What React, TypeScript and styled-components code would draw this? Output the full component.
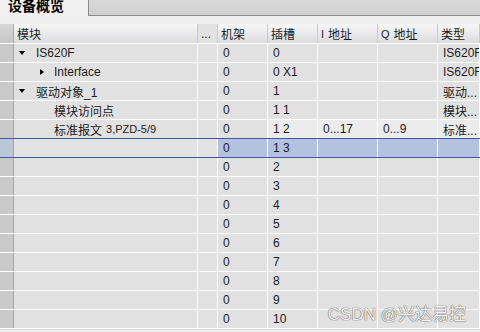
import styled, { createGlobalStyle } from "styled-components";

const GlobalStyle = createGlobalStyle`
  html, body {
    margin: 0;
    padding: 0;
    background: #efefef;
  }
`;

type Tone = "normal" | "hover" | "selected" | "focus";

const toneBg: Record<Tone, string> = {
  normal: "#e1e1e1",
  hover: "#ececec",
  selected: "#b3c2df",
  focus: "#e3e3e3",
};

const COLS = "14px 184px 20px 50px 50px 60px 60px 1fr";

// 스타일
const Page = styled.div`
  position: relative;
  width: 480px;
  height: 332px;
  overflow: hidden;
  background: #efefef;
  font-family: "Liberation Sans", "Noto Sans CJK SC", sans-serif;
  font-size: 12px;
  color: #1c1c1c;
`;

const TabStrip = styled.div`
  display: flex;
  height: 16px;
`;

const Tab = styled.div`
  width: 89px;
  background: #f0f0f0;
  border-right: 1px solid #8a8a8a;
  padding-left: 8px;
  box-sizing: border-box;
  font-size: 14px;
  font-weight: bold;
  line-height: 14px;
  color: #000;
  overflow: hidden;
  span {
    display: block;
    margin-top: -1px;
  }
`;

const TabRest = styled.div`
  flex: 1;
  background: linear-gradient(#d9d9d9, #cfcfcf);
  border-bottom: 1px solid #8c8c8c;
`;

const Table = styled.div`
  margin-top: 8px;
  display: flex;
  flex-direction: column;
`;

const HeaderRow = styled.div`
  display: grid;
  grid-template-columns: ${COLS};
  height: 20px;
  border-bottom: 1px solid #ffffff;
  box-sizing: border-box;
`;

const HeadCell = styled.div<{ $flat?: boolean }>`
  display: flex;
  align-items: center;
  padding-left: 3px;
  background: ${(p) =>
    p.$flat ? "#e2e2e2" : "linear-gradient(#f6f6f6, #e9e9eb 55%, #dcdcdf)"};
  border-right: 1px solid #cacaca;
  white-space: nowrap;
  overflow: hidden;
  small {
    font-size: 11px;
    margin-right: 4px;
  }
`;

const HeadGutter = styled.div`
  background: linear-gradient(#d6d6d6, #c6c6c6);
  border-right: 1px solid #a8a8a8;
`;

const Row = styled.div<{ $selected?: boolean }>`
  display: grid;
  grid-template-columns: ${COLS};
  height: 19px;
  border-bottom: 1px solid ${(p) => (p.$selected ? "#3f55a6" : "#ffffff")};
  box-sizing: border-box;
  box-shadow: ${(p) => (p.$selected ? "0 -1px 0 #3f55a6" : "none")};
`;

const Gutter = styled.div<{ $selected?: boolean }>`
  background: ${(p) => (p.$selected ? "#bcc7d6" : "#c9c9c9")};
  border-right: 1px solid #a8a8a8;
`;

const Cell = styled.div<{ $tone: Tone }>`
  display: flex;
  align-items: center;
  padding-left: 5px;
  background: ${(p) => toneBg[p.$tone]};
  border-right: 1px solid #ffffff;
  white-space: nowrap;
  overflow: hidden;
  small {
    font-size: 11px;
    margin-left: 4px;
  }
`;

const Toggle = styled.span<{ $open?: boolean; $none?: boolean }>`
  display: inline-flex;
  width: 17px;
  height: 18px;
  align-items: center;
  flex-shrink: 0;
  &::before {
    content: "";
    display: ${(p) => (p.$none ? "none" : "block")};
    width: 0;
    height: 0;
    margin-left: ${(p) => (p.$open ? "0" : "3px")};
    border-style: solid;
    border-color: transparent;
    ${(p) =>
      p.$open
        ? "border-width: 4.5px 3.5px 0 3.5px; border-top-color: #000;"
        : "border-width: 3.5px 0 3.5px 4px; border-left-color: #000;"}
  }
`;

const BottomBar = styled.div`
  height: 2px;
  border-top: 1px solid #d8d8d8;
  border-bottom: 1px solid #6a6a6a;
`;

const Watermark = styled.div`
  position: absolute;
  right: 14px;
  bottom: 7px;
  font-size: 17px;
  line-height: 20px;
  color: #f2f2f2;
  text-shadow: 0 0 1px rgba(0, 0, 0, 0.7), 0 0 1px rgba(0, 0, 0, 0.4);
  font-family: "Liberation Sans", "Noto Sans CJK SC", sans-serif;
`;

type Item = {
  level: number;
  toggle?: "open" | "closed";
  name?: string;
  extra?: string;
  slot: string;
  iAddr?: string;
  qAddr?: string;
  type?: string;
  hover?: boolean;
  selected?: boolean;
};

const rows: Item[] = [
  { level: 0, toggle: "open", name: "IS620F", slot: "0", type: "IS620F" },
  { level: 1, toggle: "closed", name: "Interface", slot: "0 X1", type: "IS620F" },
  { level: 0, toggle: "open", name: "驱动对象_1", slot: "1", type: "驱动..." },
  { level: 1, name: "模块访问点", slot: "1 1", type: "模块..." },
  {
    level: 1,
    name: "标准报文",
    extra: "3,PZD-5/9",
    slot: "1 2",
    iAddr: "0...17",
    qAddr: "0...9",
    type: "标准...",
    hover: true,
  },
  { level: 0, slot: "1 3", selected: true },
  ...["2", "3", "4", "5", "6", "7", "8", "9", "10"].map((s) => ({ level: 0, slot: s })),
];

export default function App() {
  return (
    <>
      <GlobalStyle />
      <Page>
        <TabStrip>
          <Tab>
            <span>设备概览</span>
          </Tab>
          <TabRest />
        </TabStrip>
        <Table>
          <HeaderRow>
            <HeadGutter />
            <HeadCell>模块</HeadCell>
            <HeadCell $flat>...</HeadCell>
            <HeadCell>机架</HeadCell>
            <HeadCell>插槽</HeadCell>
            <HeadCell>
              <small>I</small>地址
            </HeadCell>
            <HeadCell>
              <small>Q</small>地址
            </HeadCell>
            <HeadCell>类型</HeadCell>
          </HeaderRow>
          {rows.map((r, i) => {
            const focus: Tone = r.selected ? "focus" : "normal";
            const t: Tone = r.selected ? "selected" : "normal";
            const rest: Tone = r.selected ? "selected" : r.hover ? "hover" : "normal";
            return (
              <Row key={i} $selected={r.selected}>
                <Gutter $selected={r.selected} />
                <Cell $tone={focus} style={{ paddingLeft: 5 + r.level * 18 }}>
                  {r.name && (
                    <>
                      <Toggle $open={r.toggle === "open"} $none={!r.toggle} />
                      {r.name}
                      {r.extra && <small>{r.extra}</small>}
                    </>
                  )}
                </Cell>
                <Cell $tone={focus} />
                <Cell $tone={t}>0</Cell>
                <Cell $tone={rest}>{r.slot}</Cell>
                <Cell $tone={rest}>{r.iAddr}</Cell>
                <Cell $tone={rest}>{r.qAddr}</Cell>
                <Cell $tone={rest}>{r.type}</Cell>
              </Row>
            );
          })}
          <BottomBar />
        </Table>
        <Watermark>CSDN @兴达易控</Watermark>
      </Page>
    </>
  );
}
